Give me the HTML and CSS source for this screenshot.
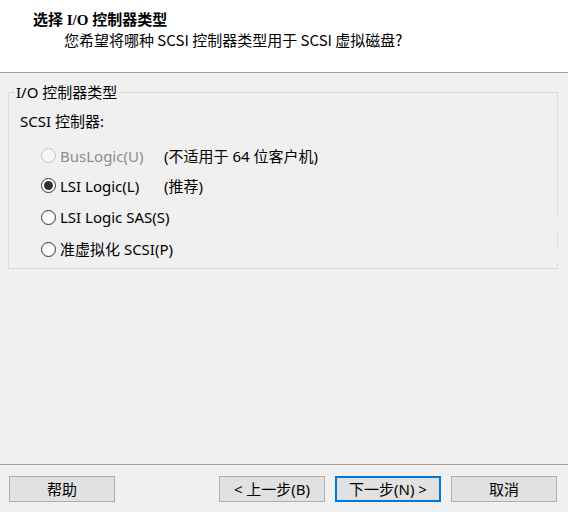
FILE: index.html
```html
<!DOCTYPE html>
<html lang="zh-CN">
<head>
<meta charset="utf-8">
<title>选择 I/O 控制器类型</title>
<link rel="stylesheet" href="styles.css">
</head>
<body>
<header class="header">
  <div class="title">选择 I/O 控制器类型</div>
  <div class="subtitle">您希望将哪种 SCSI 控制器类型用于 SCSI 虚拟磁盘?</div>
</header>
<main class="main">
  <fieldset class="group">
    <legend class="group-title">I/O 控制器类型</legend>
    <div class="group-body">
      <div class="caption">SCSI 控制器:</div>
      <div class="options">
        <div class="opt disabled"><span class="radio"></span><span>BusLogic(U)</span></div>
        <div class="note">(不适用于 64 位客户机)</div>
        <div class="opt"><span class="radio checked"></span><span>LSI Logic(L)</span></div>
        <div class="note">(推荐)</div>
        <div class="opt wide"><span class="radio"></span><span>LSI Logic SAS(S)</span></div>
        <div class="opt wide"><span class="radio"></span><span>准虚拟化 SCSI(P)</span></div>
      </div>
    </div>
  </fieldset>
</main>
<footer class="footer">
  <button class="btn">帮助</button>
  <div class="nav">
    <button class="btn">&lt; 上一步(B)</button>
    <button class="btn default">下一步(N) &gt;</button>
    <button class="btn">取消</button>
  </div>
</footer>
</body>
</html>
```
FILE: styles.css
```css
html, body {
  margin: 0;
  padding: 0;
}
body {
  width: 568px;
  height: 512px;
  overflow: hidden;
  display: flex;
  flex-direction: column;
  background: #f0f0f0;
  color: #000;
  font-family: "Noto Sans", "Noto Sans CJK SC", sans-serif;
  font-size: 15px;
}
.header {
  flex: none;
  height: 72px;
  background: #fff;
  border-bottom: 1px solid #a0a0a0;
  padding-left: 33px;
}
.title {
  margin-top: 10px;
  line-height: 20px;
  font-family: "Liberation Serif", "Noto Sans CJK SC", serif;
  font-weight: bold;
  font-size: 15px;
}
.subtitle {
  margin-left: 31px;
  line-height: 20px;
  font-family: "Noto Sans CJK SC", sans-serif;
  font-size: 15px;
}
.main {
  flex: 1;
  padding: 0 10px 0 8px;
}
.group {
  position: relative;
  box-sizing: border-box;
  width: 550px;
  margin: 10px 0 0 0;
  padding: 0 0 3px 5px;
  border: 1px solid #dcdcdc;
  min-inline-size: 0;
}
.group::before,
.group::after {
  content: "";
  position: absolute;
  right: -1px;
  width: 1px;
  height: 18px;
  background: #f0f0f0;
}
.group::before { top: 114px; }
.group::after { top: 145px; }
.group-title {
  padding: 0 2px;
  line-height: 18px;
}
.group-body {
  margin-left: 6px;
}
.caption {
  margin-top: 10px;
  line-height: 20px;
}
.options {
  margin-top: 10px;
  display: grid;
  grid-template-columns: 144px auto;
  grid-template-rows: 29px 31px 32px 32px;
  align-items: center;
}
.opt {
  display: flex;
  align-items: center;
  gap: 4px;
  padding-left: 21px;
  line-height: 20px;
  white-space: nowrap;
}
.opt.wide {
  grid-column: 1 / span 2;
}
.note {
  line-height: 20px;
  white-space: nowrap;
}
.radio {
  box-sizing: border-box;
  width: 15px;
  height: 15px;
  border: 1px solid #333;
  border-radius: 50%;
  background: #fff;
  display: flex;
  align-items: center;
  justify-content: center;
  flex: none;
}
.radio.checked::after {
  content: "";
  width: 9px;
  height: 9px;
  border-radius: 50%;
  background: #333;
}
.disabled {
  color: #8d8d8d;
}
.disabled .radio {
  border-color: #c4c4c4;
  background: #f7f7f7;
}
.footer {
  flex: none;
  box-sizing: border-box;
  height: 48px;
  border-top: 1px solid #a0a0a0;
  display: flex;
  align-items: flex-start;
  padding: 11px 11px 0 9px;
}
.nav {
  margin-left: auto;
  display: flex;
  gap: 10px;
}
.btn {
  box-sizing: border-box;
  width: 106px;
  height: 26px;
  padding: 0;
  border: 1px solid #adadad;
  background: #e1e1e1;
  color: #000;
  font-family: "Noto Sans", "Noto Sans CJK SC", sans-serif;
  font-size: 15px;
  line-height: 20px;
}
.btn.default {
  border: 2px solid #0078d7;
}
```
